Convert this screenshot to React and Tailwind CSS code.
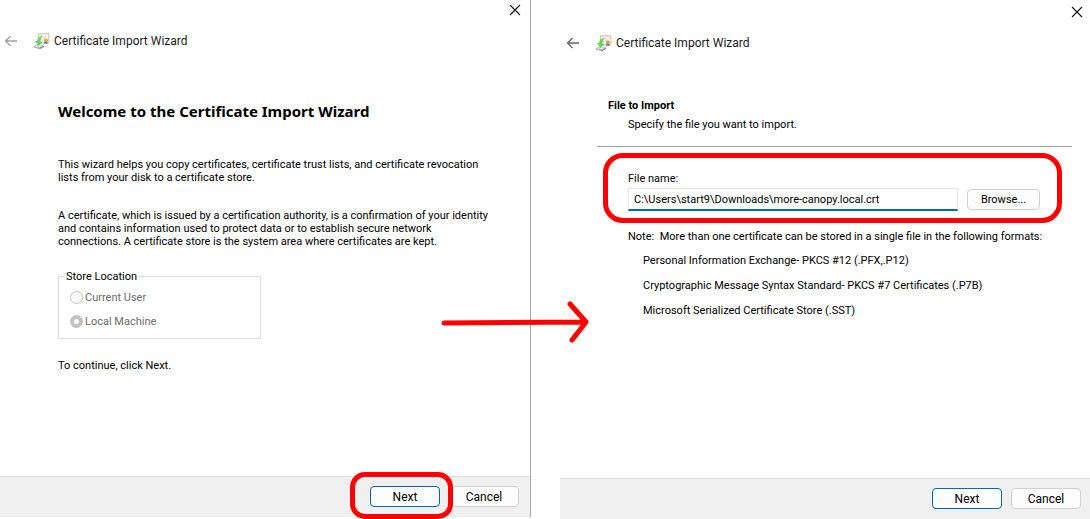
import React from "react";

const body = "text-[11px] leading-[13px]";

function CertificateIcon() {
  return (
    <svg width="17" height="17" viewBox="0 0 17 17" aria-hidden="true" className="shrink-0">
      <rect x="5.5" y="0.8" width="10.3" height="9" fill="#f8f6ee" stroke="#cfc6b2" strokeWidth="1.1" />
      <path d="M8.500 3.400h5M9.500 5.200h2" stroke="#dcdad3" strokeWidth="0.8" />
      <path d="M0.500 13.200L4.500 11.500L11.500 12.400L10.800 13.800L6.800 16.300L1 14.800Z" fill="#b4b6b4" />
      <path d="M1.500 13.300L5 12L9.800 12.700L6.600 14.200Z" fill="#e8eae8" />
      <path d="M6.800 15.500L10.800 13.400" stroke="#777" strokeWidth="0.9" />
      <path d="M9.300 3.200C6.200 3.400 4.600 5.300 4.400 8.300L2.300 8.100L5.300 12.800L9.300 9.300L7.300 8.900C7.100 6.700 7.700 5 9.300 3.200Z" fill="#5bdc55" stroke="#6fc46b" strokeWidth="0.5" />
      <path d="M11.500 8.500L11.200 11.200L12.900 10.200L14.500 11.200L14.200 8.500Z" fill="#3c6fc4" />
      <circle cx="12.900" cy="7.300" r="1.900" fill="#ee9a1c" />
    </svg>
  );
}

function TitleBar({ backDisabled, className }) {
  return (
    <header className={className}>
      <div className="flex justify-end">
        <button type="button" aria-label="Close" className="p-1">
          <svg width="12" height="12" viewBox="0 0 12 12" aria-hidden="true">
            <path d="M1 1L11 11M11 1L1 11" stroke="#111" strokeWidth="1.100" />
          </svg>
        </button>
      </div>
      <div className="flex items-center pt-3 pl-1">
        <button type="button" aria-label="Back" disabled={backDisabled} className={backDisabled ? "text-[#a2a2a2]" : "text-[#666666]"}>
          <svg width="14" height="12" viewBox="0 0 14 12" fill="none" stroke="currentColor" strokeWidth="1.300" aria-hidden="true">
            <path d="M6.500 1L1.500 6L6.500 11M1.500 6H13" />
          </svg>
        </button>
        <span className="w-[15px] shrink-0" />
        <CertificateIcon />
        <h1 className="pl-1 text-[12px] leading-[18px] text-[#1a1a1a]">Certificate Import Wizard</h1>
      </div>
    </header>
  );
}

function Button({ primary, children }) {
  return (
    <button
      type="button"
      className={
        primary
          ? "h-[21px] w-[70px] rounded-[4px] border border-[#0067c0] bg-[#fdfdfd] text-[12px] leading-[18px]"
          : "h-[21px] w-[70px] rounded-[4px] border border-[#d0d0d0] bg-[#fdfdfd] text-[12px] leading-[18px]"
      }
    >
      {children}
    </button>
  );
}

function Highlight({ className }) {
  return <div aria-hidden="true" className={`pointer-events-none absolute border-[5px] border-[#ff0000] ${className}`} />;
}

export default function App() {
  return (
    <main className="relative flex min-h-screen bg-white font-['Roboto','Noto_Sans',sans-serif] text-black">
      <section className="mb-0.5 flex min-w-0 flex-1 flex-col border-r border-[#a6a6a6]">
        <TitleBar backDisabled className="pr-[5px]" />
        <div className="flex flex-1 flex-col pt-[50px] pr-10 pl-[58px]">
          <h2 className="font-['Noto_Sans','Open_Sans',sans-serif] text-[15px] leading-[22px] font-bold whitespace-nowrap">
            Welcome to the Certificate Import Wizard
          </h2>
          <p className={`${body} pt-9 whitespace-nowrap`}>
            This wizard helps you copy certificates, certificate trust lists, and certificate revocation
            <br />
            lists from your disk to a certificate store.
          </p>
          <p className={`${body} pt-[25px] whitespace-nowrap`}>
            A certificate, which is issued by a certification authority, is a confirmation of your identity
            <br />
            and contains information used to protect data or to establish secure network
            <br />
            connections. A certificate store is the system area where certificates are kept.
          </p>
          <fieldset className={`${body} mt-[22px] w-[203px] border border-[#dcdcdc] px-[11px] pb-[10px]`}>
            <legend className="-ml-[6px] px-0.5">Store Location</legend>
            <label className="flex items-center gap-0.5 pt-2 text-[#6d6d6d]">
              <input type="radio" name="store" disabled className="size-[13px] appearance-none rounded-full border border-[#c4c4c4] bg-[#fafafa]" />
              Current User
            </label>
            <label className="flex items-center gap-0.5 pt-[11px] text-[#6d6d6d]">
              <input type="radio" name="store" disabled defaultChecked className="size-[13px] appearance-none rounded-full border-4 border-[#c2c2c2] bg-white" />
              Local Machine
            </label>
          </fieldset>
          <p className={`${body} pt-5`}>To continue, click Next.</p>
        </div>
        <footer className="flex justify-end gap-[9px] border-t border-[#dfdfdf] bg-[#f0f0f0] pt-[9px] pr-[11px] pb-[10px]">
          <div className="relative flex">
            <Button primary>Next</Button>
            <Highlight className="-top-[14px] -right-[13px] -bottom-[12px] -left-[20px] rounded-[15px]" />
          </div>
          <Button>Cancel</Button>
        </footer>
      </section>

      <section className="ml-7 flex min-w-0 flex-1 flex-col border-l border-white">
        <TitleBar className="pt-0.5 pr-[3px] pl-0.5" />
        <div className="flex flex-1 flex-col pt-[47px] pr-[18px] pl-[37px]">
          <h2 className={`${body} pl-[11px] font-bold`}>File to Import</h2>
          <p className={`${body} pt-1.5 pl-[31px]`}>Specify the file you want to import.</p>
          <hr className="mt-[15px] border-[#a0a0a0]" />
          <div className="relative mt-[25px] pl-[31px]">
            <label htmlFor="file-name" className={`${body} block`}>File name:</label>
            <div className="flex items-center gap-[9px] pt-[3px] pr-8">
              <input
                id="file-name"
                type="text"
                defaultValue="C:\Users\start9\Downloads\more-canopy.local.crt"
                className="h-[23px] min-w-0 flex-1 border border-b-2 border-[#e5e5e5] border-b-[#0067c0] bg-white px-[5px] text-[11px] outline-none"
              />
              <button type="button" className="h-[21px] w-[73px] rounded-[4px] border border-[#d0d0d0] bg-[#fdfdfd] text-[11px] leading-[13px]">
                Browse...
              </button>
            </div>
            <Highlight className="-top-[19px] right-[10px] -bottom-[12px] left-[6px] rounded-[20px]" />
          </div>
          <div className={`${body} pt-[19px] pl-[31px] whitespace-nowrap`}>
            <p className="whitespace-pre">Note:  More than one certificate can be stored in a single file in the following formats:</p>
            <ul className="flex flex-col gap-3 pt-[11px] pl-[15px]">
              <li>Personal Information Exchange- PKCS #12 (.PFX,.P12)</li>
              <li>Cryptographic Message Syntax Standard- PKCS #7 Certificates (.P7B)</li>
              <li>Microsoft Serialized Certificate Store (.SST)</li>
            </ul>
          </div>
        </div>
        <footer className="flex justify-end gap-[9px] border-t border-[#dfdfdf] bg-[#f0f0f0] pt-[9px] pr-[9px] pb-[10px]">
          <Button primary>Next</Button>
          <Button>Cancel</Button>
        </footer>
      </section>

      <svg
        width="150"
        height="46"
        viewBox="0 0 150 46"
        fill="none"
        stroke="#ff0000"
        strokeWidth="5"
        strokeLinecap="round"
        strokeLinejoin="round"
        aria-hidden="true"
        className="pointer-events-none absolute top-[300px] left-[440px]"
      >
        <path d="M4 23L146 22M130 4L146 22L132 40" />
      </svg>
    </main>
  );
}
